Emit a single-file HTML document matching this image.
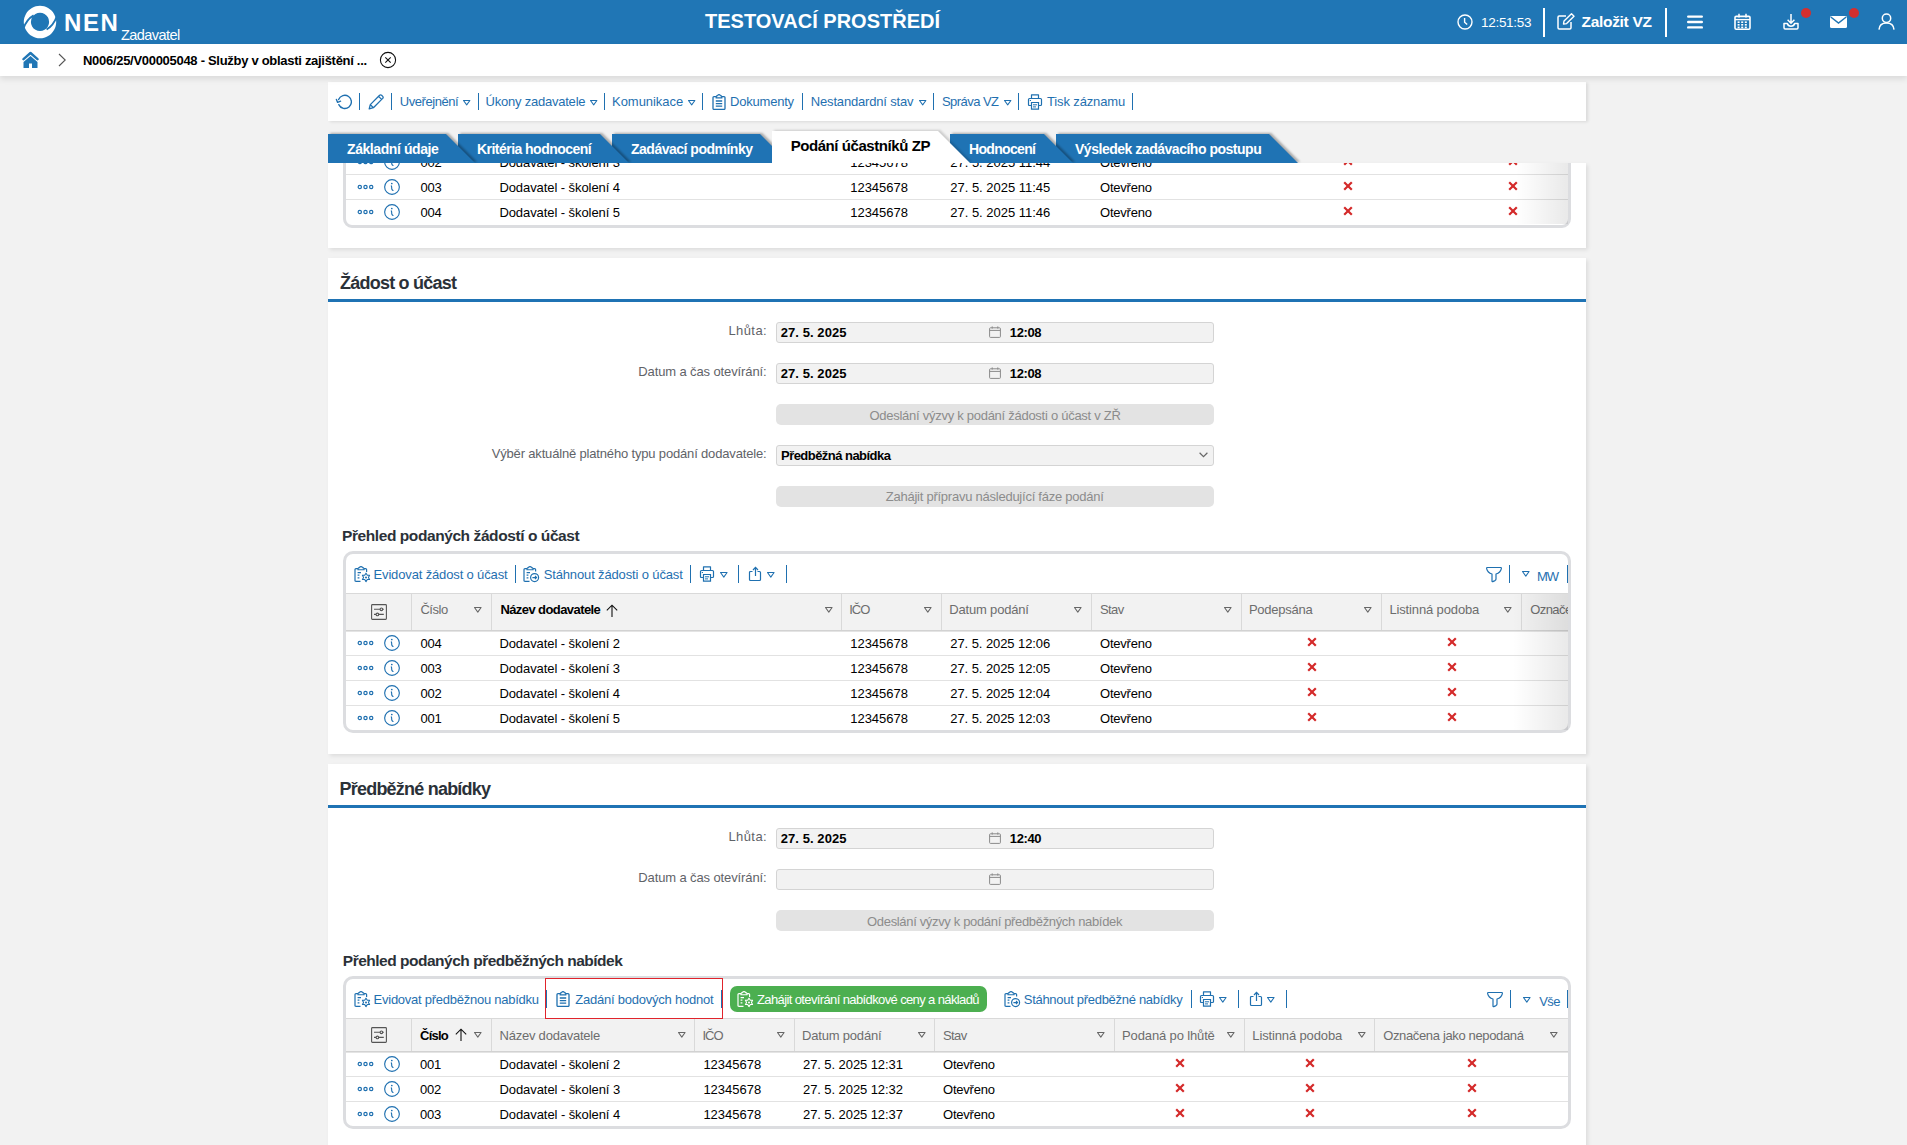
<!DOCTYPE html>
<html lang="cs"><head><meta charset="utf-8"><title>NEN</title>
<style>
html,body{margin:0;padding:0;}
body{width:1907px;height:1145px;overflow:hidden;position:relative;background:#f2f2f2;font-family:"Liberation Sans", sans-serif;}

</style></head><body>
<div style="position:absolute;left:0px;top:0px;width:1907px;height:44px;background:#2076b5;"></div>
<svg style="position:absolute;left:22px;top:4px;" width="36" height="36" viewBox="0 0 36 36"><path fill-rule="evenodd" d="M18 1.8 A16.2 16.2 0 1 1 17.99 1.8 Z M18 8.8 A9.1 9.1 0 1 0 18.01 8.8 Z" fill="#fff"/><path d="M1.2 25 Q4.5 15.5 11.6 11.4" fill="none" stroke="#2076b5" stroke-width="1.8"/><path d="M34.8 12.4 Q31.5 21.5 24.6 25.6" fill="none" stroke="#2076b5" stroke-width="1.8"/></svg>
<div style="position:absolute;top:11.00px;font-size:24px;line-height:24px;font-weight:700;color:#fff;white-space:nowrap;letter-spacing:1.580px;left:64.00px;">NEN</div>
<div style="position:absolute;top:27.50px;font-size:14.5px;line-height:14.5px;font-weight:400;color:#fff;white-space:nowrap;letter-spacing:-0.557px;left:121.00px;">Zadavatel</div>
<div style="position:absolute;top:11.00px;font-size:20px;line-height:20px;font-weight:700;color:#fff;white-space:nowrap;letter-spacing:0.012px;left:705.00px;">TESTOVACÍ PROSTŘEDÍ</div>
<svg style="position:absolute;left:1457px;top:14px;" width="16" height="16" viewBox="0 0 16 16"><circle cx="8" cy="8" r="7" fill="none" stroke="#fff" stroke-width="1.4"/><path d="M7.6 4 V8.2 L10.2 10.6" fill="none" stroke="#fff" stroke-width="1.4"/></svg>
<div style="position:absolute;top:16.00px;font-size:13.5px;line-height:13.5px;font-weight:400;color:#fff;white-space:nowrap;letter-spacing:-0.292px;left:1481.00px;">12:51:53</div>
<div style="position:absolute;left:1543px;top:8px;width:2px;height:29px;background:#fff;"></div>
<svg style="position:absolute;left:1557px;top:13px;" width="18" height="17" viewBox="0 0 18 17"><path d="M9 3 H2.2 Q1 3 1 4.2 V14.8 Q1 16 2.2 16 H12.8 Q14 16 14 14.8 V9" fill="none" stroke="#fff" stroke-width="1.5"/><path d="M6.5 11 L7 8 L14.5 0.8 L17 3.3 L9.6 10.6 Z" fill="none" stroke="#fff" stroke-width="1.4" stroke-linejoin="round"/></svg>
<div style="position:absolute;top:14.00px;font-size:15.5px;line-height:15.5px;font-weight:700;color:#fff;white-space:nowrap;letter-spacing:-0.303px;left:1581.50px;">Založit VZ</div>
<div style="position:absolute;left:1665px;top:8px;width:2px;height:29px;background:#fff;"></div>
<svg style="position:absolute;left:1687px;top:15px;" width="16" height="14" viewBox="0 0 16 14"><path d="M1.2 1.6 H14.8 M1.2 7 H14.8 M1.2 12.4 H14.8" stroke="#fff" stroke-width="2.4" stroke-linecap="round"/></svg>
<svg style="position:absolute;left:1734px;top:13px;" width="17" height="17" viewBox="0 0 17 17"><rect x="1" y="3.4" width="15" height="12.8" rx="1.2" fill="none" stroke="#fff" stroke-width="1.6"/><path d="M1 6.6 H16" stroke="#fff" stroke-width="1.4"/><path d="M5 0.8 V4.4 M12 0.8 V4.4" stroke="#fff" stroke-width="1.5"/><rect x="3.6" y="8.4" width="2" height="1.6" fill="#fff"/><rect x="3.6" y="11.0" width="2" height="1.6" fill="#fff"/><rect x="3.6" y="13.600000000000001" width="2" height="1.6" fill="#fff"/><rect x="7.2" y="8.4" width="2" height="1.6" fill="#fff"/><rect x="7.2" y="11.0" width="2" height="1.6" fill="#fff"/><rect x="7.2" y="13.600000000000001" width="2" height="1.6" fill="#fff"/><rect x="10.8" y="8.4" width="2" height="1.6" fill="#fff"/><rect x="10.8" y="11.0" width="2" height="1.6" fill="#fff"/><rect x="10.8" y="13.600000000000001" width="2" height="1.6" fill="#fff"/></svg>
<svg style="position:absolute;left:1783px;top:13px;" width="16" height="17" viewBox="0 0 16 17"><path d="M8 1 V10 M4.6 6.8 L8 10.2 L11.4 6.8" fill="none" stroke="#fff" stroke-width="1.5"/><path d="M1 10.5 V14.8 Q1 16 2.2 16 H13.8 Q15 16 15 14.8 V10.5 H11.6 Q11 13.2 8 13.2 Q5 13.2 4.4 10.5 Z" fill="none" stroke="#fff" stroke-width="1.5" stroke-linejoin="round"/></svg>
<svg style="position:absolute;left:1801px;top:8px;" width="10" height="10" viewBox="0 0 10 10"><circle cx="5" cy="5" r="5" fill="#d32f2f"/></svg>
<svg style="position:absolute;left:1830px;top:16px;" width="17" height="12" viewBox="0 0 17 12"><rect x="0" y="0" width="17" height="12" rx="1.5" fill="#fff"/><path d="M0.8 1 L8.5 7 L16.2 1" fill="none" stroke="#2076b5" stroke-width="1.5"/></svg>
<svg style="position:absolute;left:1849px;top:8px;" width="10" height="10" viewBox="0 0 10 10"><circle cx="5" cy="5" r="5" fill="#d32f2f"/></svg>
<svg style="position:absolute;left:1878px;top:13px;" width="17" height="17" viewBox="0 0 17 17"><circle cx="8.5" cy="5.2" r="4.2" fill="none" stroke="#fff" stroke-width="1.5"/><path d="M1 16.6 Q1.5 10 8.5 10 Q15.5 10 16 16.6" fill="none" stroke="#fff" stroke-width="1.5"/></svg>
<div style="position:absolute;left:0px;top:44px;width:1907px;height:32px;background:#fff;box-shadow:0 3px 6px rgba(0,0,0,0.10);z-index:5;"></div>
<svg style="position:absolute;left:22px;top:51px;z-index:6;" width="17" height="18" viewBox="0 0 17 18"><path d="M1.5 8.2 L8.5 2 L15.5 8.2" fill="none" stroke="#2076b5" stroke-width="2.4" stroke-linecap="round" stroke-linejoin="round"/><path d="M1.5 11 L8.5 5 L15.5 11 V17 H10 V12.5 H7 V17 H1.5 Z" fill="#2076b5"/></svg>
<svg style="position:absolute;left:58px;top:53px;z-index:6;" width="9" height="14" viewBox="0 0 9 14"><path d="M1 1 L7.2 7 L1 13" fill="none" stroke="#555" stroke-width="1.1"/></svg>
<div style="position:absolute;top:54.00px;font-size:13px;line-height:13px;font-weight:700;color:#000;white-space:nowrap;letter-spacing:-0.292px;left:83.00px;z-index:6;">N006/25/V00005048 - Služby v oblasti zajištění ...</div>
<svg style="position:absolute;left:379px;top:51px;z-index:6;" width="18" height="18" viewBox="0 0 18 18"><circle cx="9" cy="9" r="7.6" fill="none" stroke="#111" stroke-width="1.1"/><path d="M6.3 6.3 L11.7 11.7 M11.7 6.3 L6.3 11.7" stroke="#111" stroke-width="1.1"/></svg>
<div style="position:absolute;left:328px;top:82px;width:1258px;height:39px;background:#fff;box-shadow:2px 1px 3px rgba(0,0,0,0.10);"></div>
<svg style="position:absolute;left:335px;top:94px;" width="17" height="17" viewBox="0 0 17 17"><path d="M3.6 5.6 A6.6 6.6 0 1 1 3.8 10.6" fill="none" stroke="#1f70b0" stroke-width="1.35" stroke-linecap="round"/><path d="M1.4 5.4 L2.6 8.4 L5.6 7.2" fill="none" stroke="#1f70b0" stroke-width="1.35" stroke-linecap="round" stroke-linejoin="round"/></svg>
<div style="position:absolute;left:359px;top:93px;width:1.4px;height:17px;background:#1f70b0;"></div>
<div style="position:absolute;left:391px;top:93px;width:1.4px;height:17px;background:#1f70b0;"></div>
<div style="position:absolute;left:478px;top:93px;width:1.4px;height:17px;background:#1f70b0;"></div>
<div style="position:absolute;left:604px;top:93px;width:1.4px;height:17px;background:#1f70b0;"></div>
<div style="position:absolute;left:702px;top:93px;width:1.4px;height:17px;background:#1f70b0;"></div>
<div style="position:absolute;left:802px;top:93px;width:1.4px;height:17px;background:#1f70b0;"></div>
<div style="position:absolute;left:933px;top:93px;width:1.4px;height:17px;background:#1f70b0;"></div>
<div style="position:absolute;left:1018px;top:93px;width:1.4px;height:17px;background:#1f70b0;"></div>
<div style="position:absolute;left:1132px;top:93px;width:1.4px;height:17px;background:#1f70b0;"></div>
<svg style="position:absolute;left:368px;top:94px;" width="16" height="16" viewBox="0 0 16 16"><path d="M1.2 14.8 L2.3 10.6 L11.6 1.3 Q12.6 0.4 13.6 1.3 L14.7 2.4 Q15.6 3.4 14.7 4.4 L5.4 13.7 Z M10.6 2.4 L13.6 5.4 M2.3 10.6 L5.4 13.7" fill="none" stroke="#1f70b0" stroke-width="1.3" stroke-linejoin="round"/></svg>
<div style="position:absolute;top:94.70px;font-size:13px;line-height:13px;font-weight:400;color:#1f70b0;white-space:nowrap;letter-spacing:-0.451px;left:399.80px;">Uveřejnění</div>
<div style="position:absolute;top:94.70px;font-size:13px;line-height:13px;font-weight:400;color:#1f70b0;white-space:nowrap;letter-spacing:-0.221px;left:485.50px;">Úkony zadavatele</div>
<div style="position:absolute;top:94.70px;font-size:13px;line-height:13px;font-weight:400;color:#1f70b0;white-space:nowrap;letter-spacing:-0.034px;left:612.00px;">Komunikace</div>
<svg style="position:absolute;left:712px;top:94px;" width="14" height="16" viewBox="0 0 14 16"><path d="M4.2 2.6 H2 Q1 2.6 1 3.6 V14.4 Q1 15.4 2 15.4 H12 Q13 15.4 13 14.4 V3.6 Q13 2.6 12 2.6 H9.8" fill="none" stroke="#1f70b0" stroke-width="1.3"/><path d="M4.2 3.8 V2.6 Q4.5 1.6 5.6 1.6 Q6 0.6 7 0.6 Q8 0.6 8.4 1.6 Q9.5 1.6 9.8 2.6 V3.8 Z" fill="none" stroke="#1f70b0" stroke-width="1.2"/><path d="M3.8 7 H10.2 M3.8 9.6 H10.2 M3.8 12.2 H10.2" stroke="#1f70b0" stroke-width="1.3"/></svg>
<div style="position:absolute;top:94.70px;font-size:13px;line-height:13px;font-weight:400;color:#1f70b0;white-space:nowrap;letter-spacing:-0.206px;left:730.00px;">Dokumenty</div>
<div style="position:absolute;top:94.70px;font-size:13px;line-height:13px;font-weight:400;color:#1f70b0;white-space:nowrap;letter-spacing:-0.175px;left:810.80px;">Nestandardní stav</div>
<div style="position:absolute;top:94.70px;font-size:13px;line-height:13px;font-weight:400;color:#1f70b0;white-space:nowrap;letter-spacing:-0.559px;left:942.00px;">Správa VZ</div>
<svg style="position:absolute;left:1027px;top:94px;" width="16" height="16" viewBox="0 0 16 16"><path d="M4.5 4.5 V0.8 H11.5 V4.5" fill="none" stroke="#1f70b0" stroke-width="1.2" stroke-linejoin="round"/><path d="M4 11.5 H2.5 Q1.5 11.5 1.5 10.5 V5.5 Q1.5 4.5 2.5 4.5 H13.5 Q14.5 4.5 14.5 5.5 V10.5 Q14.5 11.5 13.5 11.5 H12" fill="none" stroke="#1f70b0" stroke-width="1.2"/><path d="M4.5 8.5 H11.5 V15.2 H4.5 Z" fill="none" stroke="#1f70b0" stroke-width="1.2"/><path d="M6 10.8 H10 M6 12.9 H9" stroke="#1f70b0" stroke-width="1"/><path d="M2.8 6.5 H4" stroke="#1f70b0" stroke-width="1"/></svg>
<div style="position:absolute;top:94.70px;font-size:13px;line-height:13px;font-weight:400;color:#1f70b0;white-space:nowrap;letter-spacing:-0.134px;left:1047.00px;">Tisk záznamu</div>
<svg style="position:absolute;left:462px;top:98.5px;" width="9.4" height="7.4" viewBox="0 0 9.4 7.4"><path d="M1.5 1.5 L7.9 1.5 L4.7 5.9 Z" fill="none" stroke="#1f70b0" stroke-width="1.05" stroke-linejoin="round"/></svg>
<svg style="position:absolute;left:589px;top:98.5px;" width="9.4" height="7.4" viewBox="0 0 9.4 7.4"><path d="M1.5 1.5 L7.9 1.5 L4.7 5.9 Z" fill="none" stroke="#1f70b0" stroke-width="1.05" stroke-linejoin="round"/></svg>
<svg style="position:absolute;left:686.6px;top:98.5px;" width="9.4" height="7.4" viewBox="0 0 9.4 7.4"><path d="M1.5 1.5 L7.9 1.5 L4.7 5.9 Z" fill="none" stroke="#1f70b0" stroke-width="1.05" stroke-linejoin="round"/></svg>
<svg style="position:absolute;left:917.5px;top:98.5px;" width="9.4" height="7.4" viewBox="0 0 9.4 7.4"><path d="M1.5 1.5 L7.9 1.5 L4.7 5.9 Z" fill="none" stroke="#1f70b0" stroke-width="1.05" stroke-linejoin="round"/></svg>
<svg style="position:absolute;left:1002.7px;top:98.5px;" width="9.4" height="7.4" viewBox="0 0 9.4 7.4"><path d="M1.5 1.5 L7.9 1.5 L4.7 5.9 Z" fill="none" stroke="#1f70b0" stroke-width="1.05" stroke-linejoin="round"/></svg>
<div style="position:absolute;left:328px;top:163px;width:1258px;height:85px;background:#fff;box-shadow:2px 2px 4px rgba(0,0,0,0.09);"></div>
<div style="position:absolute;left:328px;top:163px;width:1258px;height:85px;overflow:hidden;">
<div style="position:absolute;left:15px;top:-120px;width:1222px;height:178.5px;border:3px solid #dcdde0;border-radius:9px;"></div>
<div style="position:absolute;left:18px;top:11px;width:1222px;height:1px;background:#e2e2e2;"></div>
<div style="position:absolute;left:18px;top:36px;width:1222px;height:1px;background:#e2e2e2;"></div>
<svg style="position:absolute;left:29.100000000000023px;top:-4px;" width="17" height="6" viewBox="0 0 17 6"><circle cx="2.8" cy="3" r="1.65" fill="none" stroke="#1f70b0" stroke-width="1.2"/><circle cx="8.5" cy="3" r="1.65" fill="none" stroke="#1f70b0" stroke-width="1.2"/><circle cx="14.2" cy="3" r="1.65" fill="none" stroke="#1f70b0" stroke-width="1.2"/></svg>
<svg style="position:absolute;left:56px;top:-9px;" width="16" height="16" viewBox="0 0 16 16"><circle cx="8" cy="8" r="7.35" fill="none" stroke="#1f70b0" stroke-width="1.15"/><circle cx="7.8" cy="4.5" r="0.85" fill="#1f70b0"/><path d="M7.3 6.9 Q7.8 7.6 7.7 9.4 Q7.7 10.6 9 11.4" fill="none" stroke="#1f70b0" stroke-width="1.15" stroke-linecap="round"/></svg>
<div style="position:absolute;top:-7.00px;font-size:13px;line-height:13px;font-weight:400;color:#000;white-space:nowrap;letter-spacing:-0.230px;left:92.40px;">002</div>
<div style="position:absolute;top:-7.00px;font-size:13px;line-height:13px;font-weight:400;color:#000;white-space:nowrap;letter-spacing:-0.075px;left:171.40px;">Dodavatel - školení 3</div>
<div style="position:absolute;top:-7.00px;font-size:13px;line-height:13px;font-weight:400;color:#000;white-space:nowrap;letter-spacing:-0.001px;left:522.20px;">12345678</div>
<div style="position:absolute;top:-7.00px;font-size:13px;line-height:13px;font-weight:400;color:#000;white-space:nowrap;letter-spacing:-0.019px;left:622.30px;">27. 5. 2025 11:44</div>
<div style="position:absolute;top:-7.00px;font-size:13px;line-height:13px;font-weight:400;color:#000;white-space:nowrap;letter-spacing:-0.220px;left:772.00px;">Otevřeno</div>
<svg style="position:absolute;left:1014.5px;top:-7px;" width="10" height="10" viewBox="0 0 10 10"><path d="M1.2 1.2 L8.8 8.8 M8.8 1.2 L1.2 8.8" stroke="#d42a2a" stroke-width="2.2" stroke-linecap="butt"/></svg>
<svg style="position:absolute;left:1179.5px;top:-7px;" width="10" height="10" viewBox="0 0 10 10"><path d="M1.2 1.2 L8.8 8.8 M8.8 1.2 L1.2 8.8" stroke="#d42a2a" stroke-width="2.2" stroke-linecap="butt"/></svg>
<svg style="position:absolute;left:29.100000000000023px;top:21px;" width="17" height="6" viewBox="0 0 17 6"><circle cx="2.8" cy="3" r="1.65" fill="none" stroke="#1f70b0" stroke-width="1.2"/><circle cx="8.5" cy="3" r="1.65" fill="none" stroke="#1f70b0" stroke-width="1.2"/><circle cx="14.2" cy="3" r="1.65" fill="none" stroke="#1f70b0" stroke-width="1.2"/></svg>
<svg style="position:absolute;left:56px;top:16px;" width="16" height="16" viewBox="0 0 16 16"><circle cx="8" cy="8" r="7.35" fill="none" stroke="#1f70b0" stroke-width="1.15"/><circle cx="7.8" cy="4.5" r="0.85" fill="#1f70b0"/><path d="M7.3 6.9 Q7.8 7.6 7.7 9.4 Q7.7 10.6 9 11.4" fill="none" stroke="#1f70b0" stroke-width="1.15" stroke-linecap="round"/></svg>
<div style="position:absolute;top:18.00px;font-size:13px;line-height:13px;font-weight:400;color:#000;white-space:nowrap;letter-spacing:-0.230px;left:92.40px;">003</div>
<div style="position:absolute;top:18.00px;font-size:13px;line-height:13px;font-weight:400;color:#000;white-space:nowrap;letter-spacing:-0.075px;left:171.40px;">Dodavatel - školení 4</div>
<div style="position:absolute;top:18.00px;font-size:13px;line-height:13px;font-weight:400;color:#000;white-space:nowrap;letter-spacing:-0.001px;left:522.20px;">12345678</div>
<div style="position:absolute;top:18.00px;font-size:13px;line-height:13px;font-weight:400;color:#000;white-space:nowrap;letter-spacing:-0.019px;left:622.30px;">27. 5. 2025 11:45</div>
<div style="position:absolute;top:18.00px;font-size:13px;line-height:13px;font-weight:400;color:#000;white-space:nowrap;letter-spacing:-0.220px;left:772.00px;">Otevřeno</div>
<svg style="position:absolute;left:1014.5px;top:18px;" width="10" height="10" viewBox="0 0 10 10"><path d="M1.2 1.2 L8.8 8.8 M8.8 1.2 L1.2 8.8" stroke="#d42a2a" stroke-width="2.2" stroke-linecap="butt"/></svg>
<svg style="position:absolute;left:1179.5px;top:18px;" width="10" height="10" viewBox="0 0 10 10"><path d="M1.2 1.2 L8.8 8.8 M8.8 1.2 L1.2 8.8" stroke="#d42a2a" stroke-width="2.2" stroke-linecap="butt"/></svg>
<svg style="position:absolute;left:29.100000000000023px;top:46px;" width="17" height="6" viewBox="0 0 17 6"><circle cx="2.8" cy="3" r="1.65" fill="none" stroke="#1f70b0" stroke-width="1.2"/><circle cx="8.5" cy="3" r="1.65" fill="none" stroke="#1f70b0" stroke-width="1.2"/><circle cx="14.2" cy="3" r="1.65" fill="none" stroke="#1f70b0" stroke-width="1.2"/></svg>
<svg style="position:absolute;left:56px;top:41px;" width="16" height="16" viewBox="0 0 16 16"><circle cx="8" cy="8" r="7.35" fill="none" stroke="#1f70b0" stroke-width="1.15"/><circle cx="7.8" cy="4.5" r="0.85" fill="#1f70b0"/><path d="M7.3 6.9 Q7.8 7.6 7.7 9.4 Q7.7 10.6 9 11.4" fill="none" stroke="#1f70b0" stroke-width="1.15" stroke-linecap="round"/></svg>
<div style="position:absolute;top:43.00px;font-size:13px;line-height:13px;font-weight:400;color:#000;white-space:nowrap;letter-spacing:-0.230px;left:92.40px;">004</div>
<div style="position:absolute;top:43.00px;font-size:13px;line-height:13px;font-weight:400;color:#000;white-space:nowrap;letter-spacing:-0.075px;left:171.40px;">Dodavatel - školení 5</div>
<div style="position:absolute;top:43.00px;font-size:13px;line-height:13px;font-weight:400;color:#000;white-space:nowrap;letter-spacing:-0.001px;left:522.20px;">12345678</div>
<div style="position:absolute;top:43.00px;font-size:13px;line-height:13px;font-weight:400;color:#000;white-space:nowrap;letter-spacing:-0.019px;left:622.30px;">27. 5. 2025 11:46</div>
<div style="position:absolute;top:43.00px;font-size:13px;line-height:13px;font-weight:400;color:#000;white-space:nowrap;letter-spacing:-0.220px;left:772.00px;">Otevřeno</div>
<svg style="position:absolute;left:1014.5px;top:43px;" width="10" height="10" viewBox="0 0 10 10"><path d="M1.2 1.2 L8.8 8.8 M8.8 1.2 L1.2 8.8" stroke="#d42a2a" stroke-width="2.2" stroke-linecap="butt"/></svg>
<svg style="position:absolute;left:1179.5px;top:43px;" width="10" height="10" viewBox="0 0 10 10"><path d="M1.2 1.2 L8.8 8.8 M8.8 1.2 L1.2 8.8" stroke="#d42a2a" stroke-width="2.2" stroke-linecap="butt"/></svg>
<div style="position:absolute;left:1188px;top:0px;width:52px;height:61px;background:linear-gradient(to right,rgba(255,255,255,0),rgba(0,0,0,0.085));"></div>
</div>
<svg style="position:absolute;left:320px;top:120px;" width="1000" height="44" viewBox="0 0 1000 44"><defs><filter id="ts" x="-10%" y="-30%" width="120%" height="160%"><feGaussianBlur stdDeviation="1.2"/></filter><clipPath id="tc"><rect x="0" y="0" width="1000" height="43"/></clipPath></defs><g clip-path="url(#tc)"><g transform="translate(2.2,-1)"><polygon points="736,14 949,14 978,43 736,43" fill="rgba(0,0,0,0.3)" filter="url(#ts)"/></g><polygon points="736,14 949,14 978,43 736,43" fill="#1f73b4"/><g transform="translate(2.2,-1)"><polygon points="630,14 724,14 753,43 630,43" fill="rgba(0,0,0,0.3)" filter="url(#ts)"/></g><polygon points="630,14 724,14 753,43 630,43" fill="#1f73b4"/><g transform="translate(2.2,-1)"><polygon points="292,14 440,14 469,43 292,43" fill="rgba(0,0,0,0.3)" filter="url(#ts)"/></g><polygon points="292,14 440,14 469,43 292,43" fill="#1f73b4"/><g transform="translate(2.2,-1)"><polygon points="138,14 280,14 309,43 138,43" fill="rgba(0,0,0,0.3)" filter="url(#ts)"/></g><polygon points="138,14 280,14 309,43 138,43" fill="#1f73b4"/><g transform="translate(2.2,-1)"><polygon points="8,14 126,14 155,43 8,43" fill="rgba(0,0,0,0.3)" filter="url(#ts)"/></g><polygon points="8,14 126,14 155,43 8,43" fill="#1f73b4"/><g transform="translate(2.2,-1)"><polygon points="452,11 618,11 650,43 452,43" fill="rgba(0,0,0,0.16)" filter="url(#ts)"/></g><polygon points="452,11 618,11 650,43 452,43" fill="#fff"/></g></svg>
<div style="position:absolute;top:142.00px;font-size:14px;line-height:14px;font-weight:700;color:#fff;white-space:nowrap;letter-spacing:-0.420px;left:347.00px;">Základní údaje</div>
<div style="position:absolute;top:142.00px;font-size:14px;line-height:14px;font-weight:700;color:#fff;white-space:nowrap;letter-spacing:-0.535px;left:477.00px;">Kritéria hodnocení</div>
<div style="position:absolute;top:142.00px;font-size:14px;line-height:14px;font-weight:700;color:#fff;white-space:nowrap;letter-spacing:-0.497px;left:631.00px;">Zadávací podmínky</div>
<div style="position:absolute;top:138.00px;font-size:15px;line-height:15px;font-weight:700;color:#000;white-space:nowrap;letter-spacing:-0.434px;left:790.70px;">Podání účastníků ZP</div>
<div style="position:absolute;top:142.00px;font-size:14px;line-height:14px;font-weight:700;color:#fff;white-space:nowrap;letter-spacing:-0.680px;left:969.00px;">Hodnocení</div>
<div style="position:absolute;top:142.00px;font-size:14px;line-height:14px;font-weight:700;color:#fff;white-space:nowrap;letter-spacing:-0.478px;left:1075.00px;">Výsledek zadávacího postupu</div>
<div style="position:absolute;left:328px;top:163px;width:1258px;height:0.01px;"></div>
<div style="position:absolute;left:328px;top:258px;width:1258px;height:496px;background:#fff;box-shadow:2px 2px 4px rgba(0,0,0,0.09);"></div>
<div style="position:absolute;top:273.70px;font-size:18px;line-height:18px;font-weight:700;color:#2b3138;white-space:nowrap;letter-spacing:-0.771px;left:340.00px;">Žádost o účast</div>
<div style="position:absolute;left:328px;top:299px;width:1258px;height:3px;background:#1f73b4;"></div>
<div style="position:absolute;top:323.50px;font-size:13px;line-height:13px;font-weight:400;color:#5f6368;white-space:nowrap;letter-spacing:0.394px;left:728.50px;">Lhůta:</div>
<div style="position:absolute;left:776px;top:322px;width:436px;height:19px;background:#f2f2f2;border:1px solid #d4d4d4;border-radius:3px;"></div>
<svg style="position:absolute;left:989px;top:326px;" width="12" height="12" viewBox="0 0 12 12"><rect x="0.6" y="1.8" width="10.8" height="9.6" rx="0.8" fill="none" stroke="#8a8a8a" stroke-width="1"/><path d="M0.6 4.4 H11.4 M3.2 0.4 V2.6 M8.8 0.4 V2.6" stroke="#8a8a8a" stroke-width="1"/></svg>
<div style="position:absolute;top:326.00px;font-size:13px;line-height:13px;font-weight:700;color:#000;white-space:nowrap;letter-spacing:0.077px;left:780.70px;">27. 5. 2025</div>
<div style="position:absolute;top:326.00px;font-size:13px;line-height:13px;font-weight:700;color:#000;white-space:nowrap;letter-spacing:-0.380px;left:1009.80px;">12:08</div>
<div style="position:absolute;top:364.50px;font-size:13px;line-height:13px;font-weight:400;color:#5f6368;white-space:nowrap;letter-spacing:-0.118px;left:638.30px;">Datum a čas otevírání:</div>
<div style="position:absolute;left:776px;top:363px;width:436px;height:19px;background:#f2f2f2;border:1px solid #d4d4d4;border-radius:3px;"></div>
<svg style="position:absolute;left:989px;top:367px;" width="12" height="12" viewBox="0 0 12 12"><rect x="0.6" y="1.8" width="10.8" height="9.6" rx="0.8" fill="none" stroke="#8a8a8a" stroke-width="1"/><path d="M0.6 4.4 H11.4 M3.2 0.4 V2.6 M8.8 0.4 V2.6" stroke="#8a8a8a" stroke-width="1"/></svg>
<div style="position:absolute;top:367.00px;font-size:13px;line-height:13px;font-weight:700;color:#000;white-space:nowrap;letter-spacing:0.077px;left:780.70px;">27. 5. 2025</div>
<div style="position:absolute;top:367.00px;font-size:13px;line-height:13px;font-weight:700;color:#000;white-space:nowrap;letter-spacing:-0.380px;left:1009.80px;">12:08</div>
<div style="position:absolute;left:776px;top:404.3px;width:438px;height:20.3px;background:#e3e3e3;border-radius:5px;"></div>
<div style="position:absolute;top:408.70px;font-size:13px;line-height:13px;font-weight:400;color:#8c8c8c;white-space:nowrap;letter-spacing:-0.270px;left:869.50px;">Odeslání výzvy k podání žádosti o účast v ZŘ</div>
<div style="position:absolute;top:446.50px;font-size:13px;line-height:13px;font-weight:400;color:#5f6368;white-space:nowrap;letter-spacing:-0.167px;left:491.70px;">Výběr aktuálně platného typu podání dodavatele:</div>
<div style="position:absolute;left:776px;top:445px;width:436px;height:19px;background:#f2f2f2;border:1px solid #d4d4d4;border-radius:3px;"></div>
<div style="position:absolute;top:449.00px;font-size:13px;line-height:13px;font-weight:700;color:#000;white-space:nowrap;letter-spacing:-0.534px;left:781.00px;">Předběžná nabídka</div>
<svg style="position:absolute;left:1199px;top:452px;" width="9" height="6" viewBox="0 0 9 6"><path d="M0.6 0.8 L4.5 4.6 L8.4 0.8" fill="none" stroke="#666" stroke-width="1.2"/></svg>
<div style="position:absolute;left:776px;top:486.3px;width:438px;height:20.3px;background:#e3e3e3;border-radius:5px;"></div>
<div style="position:absolute;top:490.20px;font-size:13px;line-height:13px;font-weight:400;color:#8c8c8c;white-space:nowrap;letter-spacing:-0.244px;left:885.75px;">Zahájit přípravu následující fáze podání</div>
<div style="position:absolute;top:527.70px;font-size:15.5px;line-height:15.5px;font-weight:700;color:#2b3138;white-space:nowrap;letter-spacing:-0.418px;left:342.00px;">Přehled podaných žádostí o účast</div>
<div style="position:absolute;left:343px;top:551.4px;width:1222px;height:176.0px;border:3px solid #dcdde0;border-radius:10px;background:#fff;"></div>
<svg style="position:absolute;left:354px;top:566px;" width="17" height="17" viewBox="0 0 17 17"><path d="M6.5 15.4 H2 Q1 15.4 1 14.4 V3.6 Q1 2.6 2 2.6 H4 M10 2.6 H11.6 Q12.6 2.6 12.6 3.6 V6" fill="none" stroke="#1f70b0" stroke-width="1.2"/><path d="M4 3.8 V2.6 Q4.3 1.6 5.4 1.6 Q5.8 0.6 7 0.6 Q8.2 0.6 8.6 1.6 Q9.7 1.6 10 2.6 V3.8 Z" fill="none" stroke="#1f70b0" stroke-width="1.1"/><path d="M3.6 6.6 H7 M3.6 9.2 H5.4 M3.6 11.8 H5.4" stroke="#1f70b0" stroke-width="1.2"/><path d="M12 7.2 L13.3 9.3 L15.6 9.3 L14.4 11.4 L15.6 13.5 L13.3 13.5 L12 15.6 L10.7 13.5 L8.4 13.5 L9.6 11.4 L8.4 9.3 L10.7 9.3 Z" fill="none" stroke="#1f70b0" stroke-width="1.1" stroke-linejoin="round"/><circle cx="12" cy="11.4" r="1" fill="#1f70b0"/></svg>
<div style="position:absolute;top:568.00px;font-size:13px;line-height:13px;font-weight:400;color:#1f70b0;white-space:nowrap;letter-spacing:-0.145px;left:373.50px;">Evidovat žádost o účast</div>
<div style="position:absolute;left:515px;top:565px;width:1.25px;height:18px;background:#1f70b0;"></div>
<svg style="position:absolute;left:523px;top:566px;" width="17" height="17" viewBox="0 0 17 17"><path d="M6.5 15.4 H2 Q1 15.4 1 14.4 V3.6 Q1 2.6 2 2.6 H4 M10 2.6 H11.6 Q12.6 2.6 12.6 3.6 V5.6" fill="none" stroke="#1f70b0" stroke-width="1.2"/><path d="M4 3.8 V2.6 Q4.3 1.6 5.4 1.6 Q5.8 0.6 7 0.6 Q8.2 0.6 8.6 1.6 Q9.7 1.6 10 2.6 V3.8 Z" fill="none" stroke="#1f70b0" stroke-width="1.1"/><path d="M3.6 6.6 H7 M3.6 9.2 H5.4 M3.6 11.8 H5.4" stroke="#1f70b0" stroke-width="1.2"/><circle cx="11.6" cy="11.6" r="4" fill="none" stroke="#1f70b0" stroke-width="1.2"/><path d="M9.4 11.6 H13.6 M12 10 L13.6 11.6 L12 13.2" fill="none" stroke="#1f70b0" stroke-width="1.1"/></svg>
<div style="position:absolute;top:568.00px;font-size:13px;line-height:13px;font-weight:400;color:#1f70b0;white-space:nowrap;letter-spacing:-0.142px;left:543.70px;">Stáhnout žádosti o účast</div>
<div style="position:absolute;left:690px;top:565px;width:1.25px;height:18px;background:#1f70b0;"></div>
<svg style="position:absolute;left:699px;top:566px;" width="16" height="16" viewBox="0 0 16 16"><path d="M4.5 4.5 V0.8 H11.5 V4.5" fill="none" stroke="#1f70b0" stroke-width="1.2" stroke-linejoin="round"/><path d="M4 11.5 H2.5 Q1.5 11.5 1.5 10.5 V5.5 Q1.5 4.5 2.5 4.5 H13.5 Q14.5 4.5 14.5 5.5 V10.5 Q14.5 11.5 13.5 11.5 H12" fill="none" stroke="#1f70b0" stroke-width="1.2"/><path d="M4.5 8.5 H11.5 V15.2 H4.5 Z" fill="none" stroke="#1f70b0" stroke-width="1.2"/><path d="M6 10.8 H10 M6 12.9 H9" stroke="#1f70b0" stroke-width="1"/><path d="M2.8 6.5 H4" stroke="#1f70b0" stroke-width="1"/></svg>
<svg style="position:absolute;left:718.5px;top:571px;" width="9.6" height="7.6" viewBox="0 0 9.6 7.6"><path d="M1.5 1.5 L8.1 1.5 L4.8 6.1 Z" fill="none" stroke="#1f70b0" stroke-width="1.05" stroke-linejoin="round"/></svg>
<div style="position:absolute;left:738px;top:565px;width:1.25px;height:18px;background:#1f70b0;"></div>
<svg style="position:absolute;left:748px;top:566px;" width="14" height="16" viewBox="0 0 14 16"><path d="M4.5 5.5 H2.5 Q1.5 5.5 1.5 6.5 V13.5 Q1.5 14.5 2.5 14.5 H11.5 Q12.5 14.5 12.5 13.5 V6.5 Q12.5 5.5 11.5 5.5 H9.5" fill="none" stroke="#1f70b0" stroke-width="1.2"/><path d="M7.5 10 V1.5 M5 4 L7.5 1.3 L10 4" fill="none" stroke="#1f70b0" stroke-width="1.2"/></svg>
<svg style="position:absolute;left:766px;top:571px;" width="9.6" height="7.6" viewBox="0 0 9.6 7.6"><path d="M1.5 1.5 L8.1 1.5 L4.8 6.1 Z" fill="none" stroke="#1f70b0" stroke-width="1.05" stroke-linejoin="round"/></svg>
<div style="position:absolute;left:786px;top:565px;width:1.25px;height:18px;background:#1f70b0;"></div>
<svg style="position:absolute;left:1486px;top:566px;" width="17" height="17" viewBox="0 0 17 17"><path d="M1 1.5 H15 Q15.5 1.5 15.3 2.8 Q14.5 6.5 10 8 V13 Q10 14 9 14.6 L6.8 15.6 Q6 15.9 6 15 V8 Q1.5 6.5 0.7 2.8 Q0.5 1.5 1 1.5 Z" fill="none" stroke="#1f70b0" stroke-width="1.2" stroke-linejoin="round"/></svg>
<div style="position:absolute;left:1509px;top:565px;width:1.25px;height:18px;background:#1f70b0;"></div>
<svg style="position:absolute;left:1521px;top:570.2px;" width="9.6" height="7.6" viewBox="0 0 9.6 7.6"><path d="M1.5 1.5 L8.1 1.5 L4.8 6.1 Z" fill="none" stroke="#1f70b0" stroke-width="1.05" stroke-linejoin="round"/></svg>
<div style="position:absolute;top:569.80px;font-size:13px;line-height:13px;font-weight:400;color:#1f70b0;white-space:nowrap;letter-spacing:-1.129px;left:1537.00px;">MW</div>
<div style="position:absolute;left:1567px;top:565px;width:1.25px;height:18px;background:#1f70b0;"></div>
<div style="position:absolute;left:346px;top:593px;width:1222px;height:38px;background:#f2f2f2;"></div>
<div style="position:absolute;left:346px;top:593px;width:1222px;height:1px;background:#d9d9d9;"></div>
<div style="position:absolute;left:346px;top:630px;width:1222px;height:1px;background:#d2d2d2;"></div>
<div style="position:absolute;left:346px;top:631px;width:1222px;height:1px;background:#e4e4e4;"></div>
<div style="position:absolute;left:411.0px;top:594px;width:1px;height:36px;background:#d9d9d9;"></div>
<div style="position:absolute;left:490.9px;top:594px;width:1px;height:36px;background:#d9d9d9;"></div>
<div style="position:absolute;left:841.0px;top:594px;width:1px;height:36px;background:#d9d9d9;"></div>
<div style="position:absolute;left:940.9px;top:594px;width:1px;height:36px;background:#d9d9d9;"></div>
<div style="position:absolute;left:1090.9px;top:594px;width:1px;height:36px;background:#d9d9d9;"></div>
<div style="position:absolute;left:1240.8px;top:594px;width:1px;height:36px;background:#d9d9d9;"></div>
<div style="position:absolute;left:1380.9px;top:594px;width:1px;height:36px;background:#d9d9d9;"></div>
<div style="position:absolute;left:1520.9px;top:594px;width:1px;height:36px;background:#d9d9d9;"></div>
<svg style="position:absolute;left:371px;top:603.7px;" width="16" height="16" viewBox="0 0 16 16"><rect x="0.6" y="0.6" width="14.8" height="14.8" rx="0.8" fill="none" stroke="#555" stroke-width="1.1"/><path d="M3 5.3 H9 M11.8 5.3 H12.8 M3 10.4 H5 M7.8 10.4 H12.8" stroke="#555" stroke-width="1.1"/><circle cx="10.4" cy="5.3" r="1.3" fill="none" stroke="#555" stroke-width="1.1"/><circle cx="6.4" cy="10.4" r="1.3" fill="none" stroke="#555" stroke-width="1.1"/></svg>
<div style="position:absolute;top:603.20px;font-size:13px;line-height:13px;font-weight:400;color:#6d6d6d;white-space:nowrap;letter-spacing:-0.472px;left:420.40px;">Číslo</div>
<div style="position:absolute;top:603.20px;font-size:13px;line-height:13px;font-weight:700;color:#000;white-space:nowrap;letter-spacing:-0.578px;left:500.40px;">Název dodavatele</div>
<svg style="position:absolute;left:606px;top:603.5px;" width="12" height="14" viewBox="0 0 12 14"><path d="M6 13 V1.4 M0.8 6.4 L6 1.2 L11.2 6.4" fill="none" stroke="#111" stroke-width="1.1"/></svg>
<div style="position:absolute;top:603.20px;font-size:13px;line-height:13px;font-weight:400;color:#6d6d6d;white-space:nowrap;letter-spacing:-1.000px;left:849.20px;">IČO</div>
<div style="position:absolute;top:603.20px;font-size:13px;line-height:13px;font-weight:400;color:#6d6d6d;white-space:nowrap;letter-spacing:-0.186px;left:949.30px;">Datum podání</div>
<div style="position:absolute;top:603.20px;font-size:13px;line-height:13px;font-weight:400;color:#6d6d6d;white-space:nowrap;letter-spacing:-0.604px;left:1100.00px;">Stav</div>
<div style="position:absolute;top:603.20px;font-size:13px;line-height:13px;font-weight:400;color:#6d6d6d;white-space:nowrap;letter-spacing:-0.256px;left:1248.90px;">Podepsána</div>
<div style="position:absolute;top:603.20px;font-size:13px;line-height:13px;font-weight:400;color:#6d6d6d;white-space:nowrap;letter-spacing:-0.134px;left:1389.40px;">Listinná podoba</div>
<div style="position:absolute;left:1521px;top:590px;width:47px;height:30px;overflow:hidden;">
<div style="position:absolute;top:13.20px;font-size:13px;line-height:13px;font-weight:400;color:#6d6d6d;white-space:nowrap;letter-spacing:-0.576px;left:9.20px;">Označena</div>
</div>
<svg style="position:absolute;left:473.4px;top:606.2px;" width="9.6" height="7.6" viewBox="0 0 9.6 7.6"><path d="M1.5 1.5 L8.1 1.5 L4.8 6.1 Z" fill="none" stroke="#666" stroke-width="1.05" stroke-linejoin="round"/></svg>
<svg style="position:absolute;left:823.5px;top:606.2px;" width="9.6" height="7.6" viewBox="0 0 9.6 7.6"><path d="M1.5 1.5 L8.1 1.5 L4.8 6.1 Z" fill="none" stroke="#666" stroke-width="1.05" stroke-linejoin="round"/></svg>
<svg style="position:absolute;left:923.4px;top:606.2px;" width="9.6" height="7.6" viewBox="0 0 9.6 7.6"><path d="M1.5 1.5 L8.1 1.5 L4.8 6.1 Z" fill="none" stroke="#666" stroke-width="1.05" stroke-linejoin="round"/></svg>
<svg style="position:absolute;left:1073.4px;top:606.2px;" width="9.6" height="7.6" viewBox="0 0 9.6 7.6"><path d="M1.5 1.5 L8.1 1.5 L4.8 6.1 Z" fill="none" stroke="#666" stroke-width="1.05" stroke-linejoin="round"/></svg>
<svg style="position:absolute;left:1223.3px;top:606.2px;" width="9.6" height="7.6" viewBox="0 0 9.6 7.6"><path d="M1.5 1.5 L8.1 1.5 L4.8 6.1 Z" fill="none" stroke="#666" stroke-width="1.05" stroke-linejoin="round"/></svg>
<svg style="position:absolute;left:1363.4px;top:606.2px;" width="9.6" height="7.6" viewBox="0 0 9.6 7.6"><path d="M1.5 1.5 L8.1 1.5 L4.8 6.1 Z" fill="none" stroke="#666" stroke-width="1.05" stroke-linejoin="round"/></svg>
<svg style="position:absolute;left:1503.4px;top:606.2px;" width="9.6" height="7.6" viewBox="0 0 9.6 7.6"><path d="M1.5 1.5 L8.1 1.5 L4.8 6.1 Z" fill="none" stroke="#666" stroke-width="1.05" stroke-linejoin="round"/></svg>
<div style="position:absolute;left:346px;top:655px;width:1222px;height:1px;background:#e2e2e2;"></div>
<div style="position:absolute;left:346px;top:680px;width:1222px;height:1px;background:#e2e2e2;"></div>
<div style="position:absolute;left:346px;top:705px;width:1222px;height:1px;background:#e2e2e2;"></div>
<svg style="position:absolute;left:357.1px;top:640px;" width="17" height="6" viewBox="0 0 17 6"><circle cx="2.8" cy="3" r="1.65" fill="none" stroke="#1f70b0" stroke-width="1.2"/><circle cx="8.5" cy="3" r="1.65" fill="none" stroke="#1f70b0" stroke-width="1.2"/><circle cx="14.2" cy="3" r="1.65" fill="none" stroke="#1f70b0" stroke-width="1.2"/></svg>
<svg style="position:absolute;left:384px;top:635px;" width="16" height="16" viewBox="0 0 16 16"><circle cx="8" cy="8" r="7.35" fill="none" stroke="#1f70b0" stroke-width="1.15"/><circle cx="7.8" cy="4.5" r="0.85" fill="#1f70b0"/><path d="M7.3 6.9 Q7.8 7.6 7.7 9.4 Q7.7 10.6 9 11.4" fill="none" stroke="#1f70b0" stroke-width="1.15" stroke-linecap="round"/></svg>
<div style="position:absolute;top:637.00px;font-size:13px;line-height:13px;font-weight:400;color:#000;white-space:nowrap;letter-spacing:-0.230px;left:420.40px;">004</div>
<div style="position:absolute;top:637.00px;font-size:13px;line-height:13px;font-weight:400;color:#000;white-space:nowrap;letter-spacing:-0.075px;left:499.40px;">Dodavatel - školení 2</div>
<div style="position:absolute;top:637.00px;font-size:13px;line-height:13px;font-weight:400;color:#000;white-space:nowrap;letter-spacing:-0.001px;left:850.20px;">12345678</div>
<div style="position:absolute;top:637.00px;font-size:13px;line-height:13px;font-weight:400;color:#000;white-space:nowrap;letter-spacing:-0.079px;left:950.30px;">27. 5. 2025 12:06</div>
<div style="position:absolute;top:637.00px;font-size:13px;line-height:13px;font-weight:400;color:#000;white-space:nowrap;letter-spacing:-0.220px;left:1100.00px;">Otevřeno</div>
<svg style="position:absolute;left:1307px;top:637px;" width="10" height="10" viewBox="0 0 10 10"><path d="M1.2 1.2 L8.8 8.8 M8.8 1.2 L1.2 8.8" stroke="#d42a2a" stroke-width="2.2" stroke-linecap="butt"/></svg>
<svg style="position:absolute;left:1447px;top:637px;" width="10" height="10" viewBox="0 0 10 10"><path d="M1.2 1.2 L8.8 8.8 M8.8 1.2 L1.2 8.8" stroke="#d42a2a" stroke-width="2.2" stroke-linecap="butt"/></svg>
<svg style="position:absolute;left:357.1px;top:665px;" width="17" height="6" viewBox="0 0 17 6"><circle cx="2.8" cy="3" r="1.65" fill="none" stroke="#1f70b0" stroke-width="1.2"/><circle cx="8.5" cy="3" r="1.65" fill="none" stroke="#1f70b0" stroke-width="1.2"/><circle cx="14.2" cy="3" r="1.65" fill="none" stroke="#1f70b0" stroke-width="1.2"/></svg>
<svg style="position:absolute;left:384px;top:660px;" width="16" height="16" viewBox="0 0 16 16"><circle cx="8" cy="8" r="7.35" fill="none" stroke="#1f70b0" stroke-width="1.15"/><circle cx="7.8" cy="4.5" r="0.85" fill="#1f70b0"/><path d="M7.3 6.9 Q7.8 7.6 7.7 9.4 Q7.7 10.6 9 11.4" fill="none" stroke="#1f70b0" stroke-width="1.15" stroke-linecap="round"/></svg>
<div style="position:absolute;top:662.00px;font-size:13px;line-height:13px;font-weight:400;color:#000;white-space:nowrap;letter-spacing:-0.230px;left:420.40px;">003</div>
<div style="position:absolute;top:662.00px;font-size:13px;line-height:13px;font-weight:400;color:#000;white-space:nowrap;letter-spacing:-0.075px;left:499.40px;">Dodavatel - školení 3</div>
<div style="position:absolute;top:662.00px;font-size:13px;line-height:13px;font-weight:400;color:#000;white-space:nowrap;letter-spacing:-0.001px;left:850.20px;">12345678</div>
<div style="position:absolute;top:662.00px;font-size:13px;line-height:13px;font-weight:400;color:#000;white-space:nowrap;letter-spacing:-0.079px;left:950.30px;">27. 5. 2025 12:05</div>
<div style="position:absolute;top:662.00px;font-size:13px;line-height:13px;font-weight:400;color:#000;white-space:nowrap;letter-spacing:-0.220px;left:1100.00px;">Otevřeno</div>
<svg style="position:absolute;left:1307px;top:662px;" width="10" height="10" viewBox="0 0 10 10"><path d="M1.2 1.2 L8.8 8.8 M8.8 1.2 L1.2 8.8" stroke="#d42a2a" stroke-width="2.2" stroke-linecap="butt"/></svg>
<svg style="position:absolute;left:1447px;top:662px;" width="10" height="10" viewBox="0 0 10 10"><path d="M1.2 1.2 L8.8 8.8 M8.8 1.2 L1.2 8.8" stroke="#d42a2a" stroke-width="2.2" stroke-linecap="butt"/></svg>
<svg style="position:absolute;left:357.1px;top:690px;" width="17" height="6" viewBox="0 0 17 6"><circle cx="2.8" cy="3" r="1.65" fill="none" stroke="#1f70b0" stroke-width="1.2"/><circle cx="8.5" cy="3" r="1.65" fill="none" stroke="#1f70b0" stroke-width="1.2"/><circle cx="14.2" cy="3" r="1.65" fill="none" stroke="#1f70b0" stroke-width="1.2"/></svg>
<svg style="position:absolute;left:384px;top:685px;" width="16" height="16" viewBox="0 0 16 16"><circle cx="8" cy="8" r="7.35" fill="none" stroke="#1f70b0" stroke-width="1.15"/><circle cx="7.8" cy="4.5" r="0.85" fill="#1f70b0"/><path d="M7.3 6.9 Q7.8 7.6 7.7 9.4 Q7.7 10.6 9 11.4" fill="none" stroke="#1f70b0" stroke-width="1.15" stroke-linecap="round"/></svg>
<div style="position:absolute;top:687.00px;font-size:13px;line-height:13px;font-weight:400;color:#000;white-space:nowrap;letter-spacing:-0.230px;left:420.40px;">002</div>
<div style="position:absolute;top:687.00px;font-size:13px;line-height:13px;font-weight:400;color:#000;white-space:nowrap;letter-spacing:-0.075px;left:499.40px;">Dodavatel - školení 4</div>
<div style="position:absolute;top:687.00px;font-size:13px;line-height:13px;font-weight:400;color:#000;white-space:nowrap;letter-spacing:-0.001px;left:850.20px;">12345678</div>
<div style="position:absolute;top:687.00px;font-size:13px;line-height:13px;font-weight:400;color:#000;white-space:nowrap;letter-spacing:-0.079px;left:950.30px;">27. 5. 2025 12:04</div>
<div style="position:absolute;top:687.00px;font-size:13px;line-height:13px;font-weight:400;color:#000;white-space:nowrap;letter-spacing:-0.220px;left:1100.00px;">Otevřeno</div>
<svg style="position:absolute;left:1307px;top:687px;" width="10" height="10" viewBox="0 0 10 10"><path d="M1.2 1.2 L8.8 8.8 M8.8 1.2 L1.2 8.8" stroke="#d42a2a" stroke-width="2.2" stroke-linecap="butt"/></svg>
<svg style="position:absolute;left:1447px;top:687px;" width="10" height="10" viewBox="0 0 10 10"><path d="M1.2 1.2 L8.8 8.8 M8.8 1.2 L1.2 8.8" stroke="#d42a2a" stroke-width="2.2" stroke-linecap="butt"/></svg>
<svg style="position:absolute;left:357.1px;top:715px;" width="17" height="6" viewBox="0 0 17 6"><circle cx="2.8" cy="3" r="1.65" fill="none" stroke="#1f70b0" stroke-width="1.2"/><circle cx="8.5" cy="3" r="1.65" fill="none" stroke="#1f70b0" stroke-width="1.2"/><circle cx="14.2" cy="3" r="1.65" fill="none" stroke="#1f70b0" stroke-width="1.2"/></svg>
<svg style="position:absolute;left:384px;top:710px;" width="16" height="16" viewBox="0 0 16 16"><circle cx="8" cy="8" r="7.35" fill="none" stroke="#1f70b0" stroke-width="1.15"/><circle cx="7.8" cy="4.5" r="0.85" fill="#1f70b0"/><path d="M7.3 6.9 Q7.8 7.6 7.7 9.4 Q7.7 10.6 9 11.4" fill="none" stroke="#1f70b0" stroke-width="1.15" stroke-linecap="round"/></svg>
<div style="position:absolute;top:712.00px;font-size:13px;line-height:13px;font-weight:400;color:#000;white-space:nowrap;letter-spacing:-0.230px;left:420.40px;">001</div>
<div style="position:absolute;top:712.00px;font-size:13px;line-height:13px;font-weight:400;color:#000;white-space:nowrap;letter-spacing:-0.075px;left:499.40px;">Dodavatel - školení 5</div>
<div style="position:absolute;top:712.00px;font-size:13px;line-height:13px;font-weight:400;color:#000;white-space:nowrap;letter-spacing:-0.001px;left:850.20px;">12345678</div>
<div style="position:absolute;top:712.00px;font-size:13px;line-height:13px;font-weight:400;color:#000;white-space:nowrap;letter-spacing:-0.079px;left:950.30px;">27. 5. 2025 12:03</div>
<div style="position:absolute;top:712.00px;font-size:13px;line-height:13px;font-weight:400;color:#000;white-space:nowrap;letter-spacing:-0.220px;left:1100.00px;">Otevřeno</div>
<svg style="position:absolute;left:1307px;top:712px;" width="10" height="10" viewBox="0 0 10 10"><path d="M1.2 1.2 L8.8 8.8 M8.8 1.2 L1.2 8.8" stroke="#d42a2a" stroke-width="2.2" stroke-linecap="butt"/></svg>
<svg style="position:absolute;left:1447px;top:712px;" width="10" height="10" viewBox="0 0 10 10"><path d="M1.2 1.2 L8.8 8.8 M8.8 1.2 L1.2 8.8" stroke="#d42a2a" stroke-width="2.2" stroke-linecap="butt"/></svg>
<div style="position:absolute;left:1513px;top:594px;width:55px;height:136px;background:linear-gradient(to right,rgba(255,255,255,0),rgba(0,0,0,0.085));"></div>
<div style="position:absolute;left:328px;top:764px;width:1258px;height:391px;background:#fff;box-shadow:2px 2px 4px rgba(0,0,0,0.09);"></div>
<div style="position:absolute;top:780.30px;font-size:18px;line-height:18px;font-weight:700;color:#2b3138;white-space:nowrap;letter-spacing:-0.784px;left:339.50px;">Předběžné nabídky</div>
<div style="position:absolute;left:328px;top:805px;width:1258px;height:3px;background:#1f73b4;"></div>
<div style="position:absolute;top:829.50px;font-size:13px;line-height:13px;font-weight:400;color:#5f6368;white-space:nowrap;letter-spacing:0.394px;left:728.50px;">Lhůta:</div>
<div style="position:absolute;left:776px;top:828px;width:436px;height:19px;background:#f2f2f2;border:1px solid #d4d4d4;border-radius:3px;"></div>
<svg style="position:absolute;left:989px;top:832px;" width="12" height="12" viewBox="0 0 12 12"><rect x="0.6" y="1.8" width="10.8" height="9.6" rx="0.8" fill="none" stroke="#8a8a8a" stroke-width="1"/><path d="M0.6 4.4 H11.4 M3.2 0.4 V2.6 M8.8 0.4 V2.6" stroke="#8a8a8a" stroke-width="1"/></svg>
<div style="position:absolute;top:832.00px;font-size:13px;line-height:13px;font-weight:700;color:#000;white-space:nowrap;letter-spacing:0.077px;left:780.70px;">27. 5. 2025</div>
<div style="position:absolute;top:832.00px;font-size:13px;line-height:13px;font-weight:700;color:#000;white-space:nowrap;letter-spacing:-0.380px;left:1009.80px;">12:40</div>
<div style="position:absolute;top:870.50px;font-size:13px;line-height:13px;font-weight:400;color:#5f6368;white-space:nowrap;letter-spacing:-0.118px;left:638.30px;">Datum a čas otevírání:</div>
<div style="position:absolute;left:776px;top:869px;width:436px;height:19px;background:#f2f2f2;border:1px solid #d4d4d4;border-radius:3px;"></div>
<svg style="position:absolute;left:989px;top:873px;" width="12" height="12" viewBox="0 0 12 12"><rect x="0.6" y="1.8" width="10.8" height="9.6" rx="0.8" fill="none" stroke="#8a8a8a" stroke-width="1"/><path d="M0.6 4.4 H11.4 M3.2 0.4 V2.6 M8.8 0.4 V2.6" stroke="#8a8a8a" stroke-width="1"/></svg>
<div style="position:absolute;left:776px;top:910.3px;width:438px;height:20.3px;background:#e3e3e3;border-radius:5px;"></div>
<div style="position:absolute;top:914.90px;font-size:13px;line-height:13px;font-weight:400;color:#8c8c8c;white-space:nowrap;letter-spacing:-0.339px;left:867.10px;">Odeslání výzvy k podání předběžných nabídek</div>
<div style="position:absolute;top:952.70px;font-size:15.5px;line-height:15.5px;font-weight:700;color:#2b3138;white-space:nowrap;letter-spacing:-0.489px;left:342.80px;">Přehled podaných předběžných nabídek</div>
<div style="position:absolute;left:343px;top:975.8px;width:1222px;height:147.70000000000005px;border:3px solid #dcdde0;border-radius:10px;background:#fff;"></div>
<svg style="position:absolute;left:354px;top:991px;" width="17" height="17" viewBox="0 0 17 17"><path d="M6.5 15.4 H2 Q1 15.4 1 14.4 V3.6 Q1 2.6 2 2.6 H4 M10 2.6 H11.6 Q12.6 2.6 12.6 3.6 V6" fill="none" stroke="#1f70b0" stroke-width="1.2"/><path d="M4 3.8 V2.6 Q4.3 1.6 5.4 1.6 Q5.8 0.6 7 0.6 Q8.2 0.6 8.6 1.6 Q9.7 1.6 10 2.6 V3.8 Z" fill="none" stroke="#1f70b0" stroke-width="1.1"/><path d="M3.6 6.6 H7 M3.6 9.2 H5.4 M3.6 11.8 H5.4" stroke="#1f70b0" stroke-width="1.2"/><path d="M12 7.2 L13.3 9.3 L15.6 9.3 L14.4 11.4 L15.6 13.5 L13.3 13.5 L12 15.6 L10.7 13.5 L8.4 13.5 L9.6 11.4 L8.4 9.3 L10.7 9.3 Z" fill="none" stroke="#1f70b0" stroke-width="1.1" stroke-linejoin="round"/><circle cx="12" cy="11.4" r="1" fill="#1f70b0"/></svg>
<div style="position:absolute;top:993.00px;font-size:13px;line-height:13px;font-weight:400;color:#1f70b0;white-space:nowrap;letter-spacing:-0.253px;left:373.60px;">Evidovat předběžnou nabídku</div>
<div style="position:absolute;left:546px;top:990px;width:1.25px;height:18px;background:#1f70b0;"></div>
<svg style="position:absolute;left:556px;top:991px;" width="14" height="16" viewBox="0 0 14 16"><path d="M4.2 2.6 H2 Q1 2.6 1 3.6 V14.4 Q1 15.4 2 15.4 H12 Q13 15.4 13 14.4 V3.6 Q13 2.6 12 2.6 H9.8" fill="none" stroke="#1f70b0" stroke-width="1.3"/><path d="M4.2 3.8 V2.6 Q4.5 1.6 5.6 1.6 Q6 0.6 7 0.6 Q8 0.6 8.4 1.6 Q9.5 1.6 9.8 2.6 V3.8 Z" fill="none" stroke="#1f70b0" stroke-width="1.2"/><path d="M3.8 7 H10.2 M3.8 9.6 H10.2 M3.8 12.2 H10.2" stroke="#1f70b0" stroke-width="1.3"/></svg>
<div style="position:absolute;top:993.00px;font-size:13px;line-height:13px;font-weight:400;color:#1f70b0;white-space:nowrap;letter-spacing:-0.228px;left:575.30px;">Zadání bodových hodnot</div>
<div style="position:absolute;left:721px;top:990px;width:1.25px;height:18px;background:#1f70b0;"></div>
<div style="position:absolute;left:730px;top:986px;width:257px;height:26px;background:#4caf50;border-radius:7px;"></div>
<svg style="position:absolute;left:737px;top:991px;" width="17" height="17" viewBox="0 0 17 17"><path d="M6.5 15.4 H2 Q1 15.4 1 14.4 V3.6 Q1 2.6 2 2.6 H4 M10 2.6 H11.6 Q12.6 2.6 12.6 3.6 V6" fill="none" stroke="#fff" stroke-width="1.2"/><path d="M4 3.8 V2.6 Q4.3 1.6 5.4 1.6 Q5.8 0.6 7 0.6 Q8.2 0.6 8.6 1.6 Q9.7 1.6 10 2.6 V3.8 Z" fill="none" stroke="#fff" stroke-width="1.1"/><path d="M3.6 6.6 H7 M3.6 9.2 H5.4 M3.6 11.8 H5.4" stroke="#fff" stroke-width="1.2"/><path d="M12 7.2 L13.3 9.3 L15.6 9.3 L14.4 11.4 L15.6 13.5 L13.3 13.5 L12 15.6 L10.7 13.5 L8.4 13.5 L9.6 11.4 L8.4 9.3 L10.7 9.3 Z" fill="none" stroke="#fff" stroke-width="1.1" stroke-linejoin="round"/><circle cx="12" cy="11.4" r="1" fill="#fff"/></svg>
<div style="position:absolute;top:992.80px;font-size:13px;line-height:13px;font-weight:400;color:#fff;white-space:nowrap;letter-spacing:-0.618px;left:757.00px;">Zahájit otevírání nabídkové ceny a nákladů</div>
<svg style="position:absolute;left:1003.5px;top:991px;" width="17" height="17" viewBox="0 0 17 17"><path d="M6.5 15.4 H2 Q1 15.4 1 14.4 V3.6 Q1 2.6 2 2.6 H4 M10 2.6 H11.6 Q12.6 2.6 12.6 3.6 V5.6" fill="none" stroke="#1f70b0" stroke-width="1.2"/><path d="M4 3.8 V2.6 Q4.3 1.6 5.4 1.6 Q5.8 0.6 7 0.6 Q8.2 0.6 8.6 1.6 Q9.7 1.6 10 2.6 V3.8 Z" fill="none" stroke="#1f70b0" stroke-width="1.1"/><path d="M3.6 6.6 H7 M3.6 9.2 H5.4 M3.6 11.8 H5.4" stroke="#1f70b0" stroke-width="1.2"/><circle cx="11.6" cy="11.6" r="4" fill="none" stroke="#1f70b0" stroke-width="1.2"/><path d="M9.4 11.6 H13.6 M12 10 L13.6 11.6 L12 13.2" fill="none" stroke="#1f70b0" stroke-width="1.1"/></svg>
<div style="position:absolute;top:993.00px;font-size:13px;line-height:13px;font-weight:400;color:#1f70b0;white-space:nowrap;letter-spacing:-0.294px;left:1023.80px;">Stáhnout předběžné nabídky</div>
<div style="position:absolute;left:1191px;top:990px;width:1.25px;height:18px;background:#1f70b0;"></div>
<svg style="position:absolute;left:1199px;top:991px;" width="16" height="16" viewBox="0 0 16 16"><path d="M4.5 4.5 V0.8 H11.5 V4.5" fill="none" stroke="#1f70b0" stroke-width="1.2" stroke-linejoin="round"/><path d="M4 11.5 H2.5 Q1.5 11.5 1.5 10.5 V5.5 Q1.5 4.5 2.5 4.5 H13.5 Q14.5 4.5 14.5 5.5 V10.5 Q14.5 11.5 13.5 11.5 H12" fill="none" stroke="#1f70b0" stroke-width="1.2"/><path d="M4.5 8.5 H11.5 V15.2 H4.5 Z" fill="none" stroke="#1f70b0" stroke-width="1.2"/><path d="M6 10.8 H10 M6 12.9 H9" stroke="#1f70b0" stroke-width="1"/><path d="M2.8 6.5 H4" stroke="#1f70b0" stroke-width="1"/></svg>
<svg style="position:absolute;left:1218.3px;top:995.5px;" width="9.6" height="7.6" viewBox="0 0 9.6 7.6"><path d="M1.5 1.5 L8.1 1.5 L4.8 6.1 Z" fill="none" stroke="#1f70b0" stroke-width="1.05" stroke-linejoin="round"/></svg>
<div style="position:absolute;left:1238px;top:990px;width:1.25px;height:18px;background:#1f70b0;"></div>
<svg style="position:absolute;left:1249px;top:991px;" width="14" height="16" viewBox="0 0 14 16"><path d="M4.5 5.5 H2.5 Q1.5 5.5 1.5 6.5 V13.5 Q1.5 14.5 2.5 14.5 H11.5 Q12.5 14.5 12.5 13.5 V6.5 Q12.5 5.5 11.5 5.5 H9.5" fill="none" stroke="#1f70b0" stroke-width="1.2"/><path d="M7.5 10 V1.5 M5 4 L7.5 1.3 L10 4" fill="none" stroke="#1f70b0" stroke-width="1.2"/></svg>
<svg style="position:absolute;left:1266.3px;top:995.5px;" width="9.6" height="7.6" viewBox="0 0 9.6 7.6"><path d="M1.5 1.5 L8.1 1.5 L4.8 6.1 Z" fill="none" stroke="#1f70b0" stroke-width="1.05" stroke-linejoin="round"/></svg>
<div style="position:absolute;left:1286px;top:990px;width:1.25px;height:18px;background:#1f70b0;"></div>
<svg style="position:absolute;left:1486.7px;top:991px;" width="17" height="17" viewBox="0 0 17 17"><path d="M1 1.5 H15 Q15.5 1.5 15.3 2.8 Q14.5 6.5 10 8 V13 Q10 14 9 14.6 L6.8 15.6 Q6 15.9 6 15 V8 Q1.5 6.5 0.7 2.8 Q0.5 1.5 1 1.5 Z" fill="none" stroke="#1f70b0" stroke-width="1.2" stroke-linejoin="round"/></svg>
<div style="position:absolute;left:1510px;top:990px;width:1.25px;height:18px;background:#1f70b0;"></div>
<svg style="position:absolute;left:1521.6px;top:995.5px;" width="9.6" height="7.6" viewBox="0 0 9.6 7.6"><path d="M1.5 1.5 L8.1 1.5 L4.8 6.1 Z" fill="none" stroke="#1f70b0" stroke-width="1.05" stroke-linejoin="round"/></svg>
<div style="position:absolute;top:994.70px;font-size:13px;line-height:13px;font-weight:400;color:#1f70b0;white-space:nowrap;letter-spacing:-0.585px;left:1539.20px;">Vše</div>
<div style="position:absolute;left:1567px;top:990px;width:1.25px;height:18px;background:#1f70b0;"></div>
<div style="position:absolute;left:346px;top:1018px;width:1222px;height:34px;background:#f2f2f2;"></div>
<div style="position:absolute;left:346px;top:1018px;width:1222px;height:1px;background:#d9d9d9;"></div>
<div style="position:absolute;left:346px;top:1051px;width:1222px;height:1px;background:#d2d2d2;"></div>
<div style="position:absolute;left:346px;top:1052px;width:1222px;height:1px;background:#e4e4e4;"></div>
<div style="position:absolute;left:410.8px;top:1019px;width:1px;height:32px;background:#d9d9d9;"></div>
<div style="position:absolute;left:490.9px;top:1019px;width:1px;height:32px;background:#d9d9d9;"></div>
<div style="position:absolute;left:694.0px;top:1019px;width:1px;height:32px;background:#d9d9d9;"></div>
<div style="position:absolute;left:793.9px;top:1019px;width:1px;height:32px;background:#d9d9d9;"></div>
<div style="position:absolute;left:934.2px;top:1019px;width:1px;height:32px;background:#d9d9d9;"></div>
<div style="position:absolute;left:1113.9px;top:1019px;width:1px;height:32px;background:#d9d9d9;"></div>
<div style="position:absolute;left:1243.7px;top:1019px;width:1px;height:32px;background:#d9d9d9;"></div>
<div style="position:absolute;left:1374.0px;top:1019px;width:1px;height:32px;background:#d9d9d9;"></div>
<svg style="position:absolute;left:371px;top:1026.7px;" width="16" height="16" viewBox="0 0 16 16"><rect x="0.6" y="0.6" width="14.8" height="14.8" rx="0.8" fill="none" stroke="#555" stroke-width="1.1"/><path d="M3 5.3 H9 M11.8 5.3 H12.8 M3 10.4 H5 M7.8 10.4 H12.8" stroke="#555" stroke-width="1.1"/><circle cx="10.4" cy="5.3" r="1.3" fill="none" stroke="#555" stroke-width="1.1"/><circle cx="6.4" cy="10.4" r="1.3" fill="none" stroke="#555" stroke-width="1.1"/></svg>
<div style="position:absolute;top:1028.50px;font-size:13px;line-height:13px;font-weight:700;color:#000;white-space:nowrap;letter-spacing:-0.810px;left:420.10px;">Číslo</div>
<svg style="position:absolute;left:455px;top:1028.2px;" width="12" height="14" viewBox="0 0 12 14"><path d="M6 13 V1.4 M0.8 6.4 L6 1.2 L11.2 6.4" fill="none" stroke="#111" stroke-width="1.1"/></svg>
<div style="position:absolute;top:1028.50px;font-size:13px;line-height:13px;font-weight:400;color:#6d6d6d;white-space:nowrap;letter-spacing:-0.223px;left:499.50px;">Název dodavatele</div>
<div style="position:absolute;top:1028.50px;font-size:13px;line-height:13px;font-weight:400;color:#6d6d6d;white-space:nowrap;letter-spacing:-1.000px;left:702.40px;">IČO</div>
<div style="position:absolute;top:1028.50px;font-size:13px;line-height:13px;font-weight:400;color:#6d6d6d;white-space:nowrap;letter-spacing:-0.186px;left:802.00px;">Datum podání</div>
<div style="position:absolute;top:1028.50px;font-size:13px;line-height:13px;font-weight:400;color:#6d6d6d;white-space:nowrap;letter-spacing:-0.604px;left:943.00px;">Stav</div>
<div style="position:absolute;top:1028.50px;font-size:13px;line-height:13px;font-weight:400;color:#6d6d6d;white-space:nowrap;letter-spacing:-0.140px;left:1122.10px;">Podaná po lhůtě</div>
<div style="position:absolute;top:1028.50px;font-size:13px;line-height:13px;font-weight:400;color:#6d6d6d;white-space:nowrap;letter-spacing:-0.134px;left:1252.30px;">Listinná podoba</div>
<div style="position:absolute;top:1028.50px;font-size:13px;line-height:13px;font-weight:400;color:#6d6d6d;white-space:nowrap;letter-spacing:-0.354px;left:1383.20px;">Označena jako nepodaná</div>
<svg style="position:absolute;left:473.4px;top:1031.4px;" width="9.6" height="7.6" viewBox="0 0 9.6 7.6"><path d="M1.5 1.5 L8.1 1.5 L4.8 6.1 Z" fill="none" stroke="#666" stroke-width="1.05" stroke-linejoin="round"/></svg>
<svg style="position:absolute;left:676.5px;top:1031.4px;" width="9.6" height="7.6" viewBox="0 0 9.6 7.6"><path d="M1.5 1.5 L8.1 1.5 L4.8 6.1 Z" fill="none" stroke="#666" stroke-width="1.05" stroke-linejoin="round"/></svg>
<svg style="position:absolute;left:776.4px;top:1031.4px;" width="9.6" height="7.6" viewBox="0 0 9.6 7.6"><path d="M1.5 1.5 L8.1 1.5 L4.8 6.1 Z" fill="none" stroke="#666" stroke-width="1.05" stroke-linejoin="round"/></svg>
<svg style="position:absolute;left:916.7px;top:1031.4px;" width="9.6" height="7.6" viewBox="0 0 9.6 7.6"><path d="M1.5 1.5 L8.1 1.5 L4.8 6.1 Z" fill="none" stroke="#666" stroke-width="1.05" stroke-linejoin="round"/></svg>
<svg style="position:absolute;left:1096.4px;top:1031.4px;" width="9.6" height="7.6" viewBox="0 0 9.6 7.6"><path d="M1.5 1.5 L8.1 1.5 L4.8 6.1 Z" fill="none" stroke="#666" stroke-width="1.05" stroke-linejoin="round"/></svg>
<svg style="position:absolute;left:1226.2px;top:1031.4px;" width="9.6" height="7.6" viewBox="0 0 9.6 7.6"><path d="M1.5 1.5 L8.1 1.5 L4.8 6.1 Z" fill="none" stroke="#666" stroke-width="1.05" stroke-linejoin="round"/></svg>
<svg style="position:absolute;left:1356.5px;top:1031.4px;" width="9.6" height="7.6" viewBox="0 0 9.6 7.6"><path d="M1.5 1.5 L8.1 1.5 L4.8 6.1 Z" fill="none" stroke="#666" stroke-width="1.05" stroke-linejoin="round"/></svg>
<svg style="position:absolute;left:1549px;top:1031.4px;" width="9.6" height="7.6" viewBox="0 0 9.6 7.6"><path d="M1.5 1.5 L8.1 1.5 L4.8 6.1 Z" fill="none" stroke="#666" stroke-width="1.05" stroke-linejoin="round"/></svg>
<div style="position:absolute;left:346px;top:1076px;width:1222px;height:1px;background:#e2e2e2;"></div>
<div style="position:absolute;left:346px;top:1101px;width:1222px;height:1px;background:#e2e2e2;"></div>
<svg style="position:absolute;left:357.1px;top:1061px;" width="17" height="6" viewBox="0 0 17 6"><circle cx="2.8" cy="3" r="1.65" fill="none" stroke="#1f70b0" stroke-width="1.2"/><circle cx="8.5" cy="3" r="1.65" fill="none" stroke="#1f70b0" stroke-width="1.2"/><circle cx="14.2" cy="3" r="1.65" fill="none" stroke="#1f70b0" stroke-width="1.2"/></svg>
<svg style="position:absolute;left:384px;top:1056px;" width="16" height="16" viewBox="0 0 16 16"><circle cx="8" cy="8" r="7.35" fill="none" stroke="#1f70b0" stroke-width="1.15"/><circle cx="7.8" cy="4.5" r="0.85" fill="#1f70b0"/><path d="M7.3 6.9 Q7.8 7.6 7.7 9.4 Q7.7 10.6 9 11.4" fill="none" stroke="#1f70b0" stroke-width="1.15" stroke-linecap="round"/></svg>
<div style="position:absolute;top:1058.00px;font-size:13px;line-height:13px;font-weight:400;color:#000;white-space:nowrap;letter-spacing:-0.230px;left:420.10px;">001</div>
<div style="position:absolute;top:1058.00px;font-size:13px;line-height:13px;font-weight:400;color:#000;white-space:nowrap;letter-spacing:-0.075px;left:499.50px;">Dodavatel - školení 2</div>
<div style="position:absolute;top:1058.00px;font-size:13px;line-height:13px;font-weight:400;color:#000;white-space:nowrap;letter-spacing:-0.001px;left:703.40px;">12345678</div>
<div style="position:absolute;top:1058.00px;font-size:13px;line-height:13px;font-weight:400;color:#000;white-space:nowrap;letter-spacing:-0.079px;left:803.00px;">27. 5. 2025 12:31</div>
<div style="position:absolute;top:1058.00px;font-size:13px;line-height:13px;font-weight:400;color:#000;white-space:nowrap;letter-spacing:-0.220px;left:943.00px;">Otevřeno</div>
<svg style="position:absolute;left:1175px;top:1058px;" width="10" height="10" viewBox="0 0 10 10"><path d="M1.2 1.2 L8.8 8.8 M8.8 1.2 L1.2 8.8" stroke="#d42a2a" stroke-width="2.2" stroke-linecap="butt"/></svg>
<svg style="position:absolute;left:1305px;top:1058px;" width="10" height="10" viewBox="0 0 10 10"><path d="M1.2 1.2 L8.8 8.8 M8.8 1.2 L1.2 8.8" stroke="#d42a2a" stroke-width="2.2" stroke-linecap="butt"/></svg>
<svg style="position:absolute;left:1466.5px;top:1058px;" width="10" height="10" viewBox="0 0 10 10"><path d="M1.2 1.2 L8.8 8.8 M8.8 1.2 L1.2 8.8" stroke="#d42a2a" stroke-width="2.2" stroke-linecap="butt"/></svg>
<svg style="position:absolute;left:357.1px;top:1086px;" width="17" height="6" viewBox="0 0 17 6"><circle cx="2.8" cy="3" r="1.65" fill="none" stroke="#1f70b0" stroke-width="1.2"/><circle cx="8.5" cy="3" r="1.65" fill="none" stroke="#1f70b0" stroke-width="1.2"/><circle cx="14.2" cy="3" r="1.65" fill="none" stroke="#1f70b0" stroke-width="1.2"/></svg>
<svg style="position:absolute;left:384px;top:1081px;" width="16" height="16" viewBox="0 0 16 16"><circle cx="8" cy="8" r="7.35" fill="none" stroke="#1f70b0" stroke-width="1.15"/><circle cx="7.8" cy="4.5" r="0.85" fill="#1f70b0"/><path d="M7.3 6.9 Q7.8 7.6 7.7 9.4 Q7.7 10.6 9 11.4" fill="none" stroke="#1f70b0" stroke-width="1.15" stroke-linecap="round"/></svg>
<div style="position:absolute;top:1083.00px;font-size:13px;line-height:13px;font-weight:400;color:#000;white-space:nowrap;letter-spacing:-0.230px;left:420.10px;">002</div>
<div style="position:absolute;top:1083.00px;font-size:13px;line-height:13px;font-weight:400;color:#000;white-space:nowrap;letter-spacing:-0.075px;left:499.50px;">Dodavatel - školení 3</div>
<div style="position:absolute;top:1083.00px;font-size:13px;line-height:13px;font-weight:400;color:#000;white-space:nowrap;letter-spacing:-0.001px;left:703.40px;">12345678</div>
<div style="position:absolute;top:1083.00px;font-size:13px;line-height:13px;font-weight:400;color:#000;white-space:nowrap;letter-spacing:-0.079px;left:803.00px;">27. 5. 2025 12:32</div>
<div style="position:absolute;top:1083.00px;font-size:13px;line-height:13px;font-weight:400;color:#000;white-space:nowrap;letter-spacing:-0.220px;left:943.00px;">Otevřeno</div>
<svg style="position:absolute;left:1175px;top:1083px;" width="10" height="10" viewBox="0 0 10 10"><path d="M1.2 1.2 L8.8 8.8 M8.8 1.2 L1.2 8.8" stroke="#d42a2a" stroke-width="2.2" stroke-linecap="butt"/></svg>
<svg style="position:absolute;left:1305px;top:1083px;" width="10" height="10" viewBox="0 0 10 10"><path d="M1.2 1.2 L8.8 8.8 M8.8 1.2 L1.2 8.8" stroke="#d42a2a" stroke-width="2.2" stroke-linecap="butt"/></svg>
<svg style="position:absolute;left:1466.5px;top:1083px;" width="10" height="10" viewBox="0 0 10 10"><path d="M1.2 1.2 L8.8 8.8 M8.8 1.2 L1.2 8.8" stroke="#d42a2a" stroke-width="2.2" stroke-linecap="butt"/></svg>
<svg style="position:absolute;left:357.1px;top:1111px;" width="17" height="6" viewBox="0 0 17 6"><circle cx="2.8" cy="3" r="1.65" fill="none" stroke="#1f70b0" stroke-width="1.2"/><circle cx="8.5" cy="3" r="1.65" fill="none" stroke="#1f70b0" stroke-width="1.2"/><circle cx="14.2" cy="3" r="1.65" fill="none" stroke="#1f70b0" stroke-width="1.2"/></svg>
<svg style="position:absolute;left:384px;top:1106px;" width="16" height="16" viewBox="0 0 16 16"><circle cx="8" cy="8" r="7.35" fill="none" stroke="#1f70b0" stroke-width="1.15"/><circle cx="7.8" cy="4.5" r="0.85" fill="#1f70b0"/><path d="M7.3 6.9 Q7.8 7.6 7.7 9.4 Q7.7 10.6 9 11.4" fill="none" stroke="#1f70b0" stroke-width="1.15" stroke-linecap="round"/></svg>
<div style="position:absolute;top:1108.00px;font-size:13px;line-height:13px;font-weight:400;color:#000;white-space:nowrap;letter-spacing:-0.230px;left:420.10px;">003</div>
<div style="position:absolute;top:1108.00px;font-size:13px;line-height:13px;font-weight:400;color:#000;white-space:nowrap;letter-spacing:-0.075px;left:499.50px;">Dodavatel - školení 4</div>
<div style="position:absolute;top:1108.00px;font-size:13px;line-height:13px;font-weight:400;color:#000;white-space:nowrap;letter-spacing:-0.001px;left:703.40px;">12345678</div>
<div style="position:absolute;top:1108.00px;font-size:13px;line-height:13px;font-weight:400;color:#000;white-space:nowrap;letter-spacing:-0.079px;left:803.00px;">27. 5. 2025 12:37</div>
<div style="position:absolute;top:1108.00px;font-size:13px;line-height:13px;font-weight:400;color:#000;white-space:nowrap;letter-spacing:-0.220px;left:943.00px;">Otevřeno</div>
<svg style="position:absolute;left:1175px;top:1108px;" width="10" height="10" viewBox="0 0 10 10"><path d="M1.2 1.2 L8.8 8.8 M8.8 1.2 L1.2 8.8" stroke="#d42a2a" stroke-width="2.2" stroke-linecap="butt"/></svg>
<svg style="position:absolute;left:1305px;top:1108px;" width="10" height="10" viewBox="0 0 10 10"><path d="M1.2 1.2 L8.8 8.8 M8.8 1.2 L1.2 8.8" stroke="#d42a2a" stroke-width="2.2" stroke-linecap="butt"/></svg>
<svg style="position:absolute;left:1466.5px;top:1108px;" width="10" height="10" viewBox="0 0 10 10"><path d="M1.2 1.2 L8.8 8.8 M8.8 1.2 L1.2 8.8" stroke="#d42a2a" stroke-width="2.2" stroke-linecap="butt"/></svg>
<div style="position:absolute;left:545px;top:978.4px;width:177.8px;height:40.3px;border:1px solid #e0242c;box-sizing:border-box;"></div>
</body></html>
